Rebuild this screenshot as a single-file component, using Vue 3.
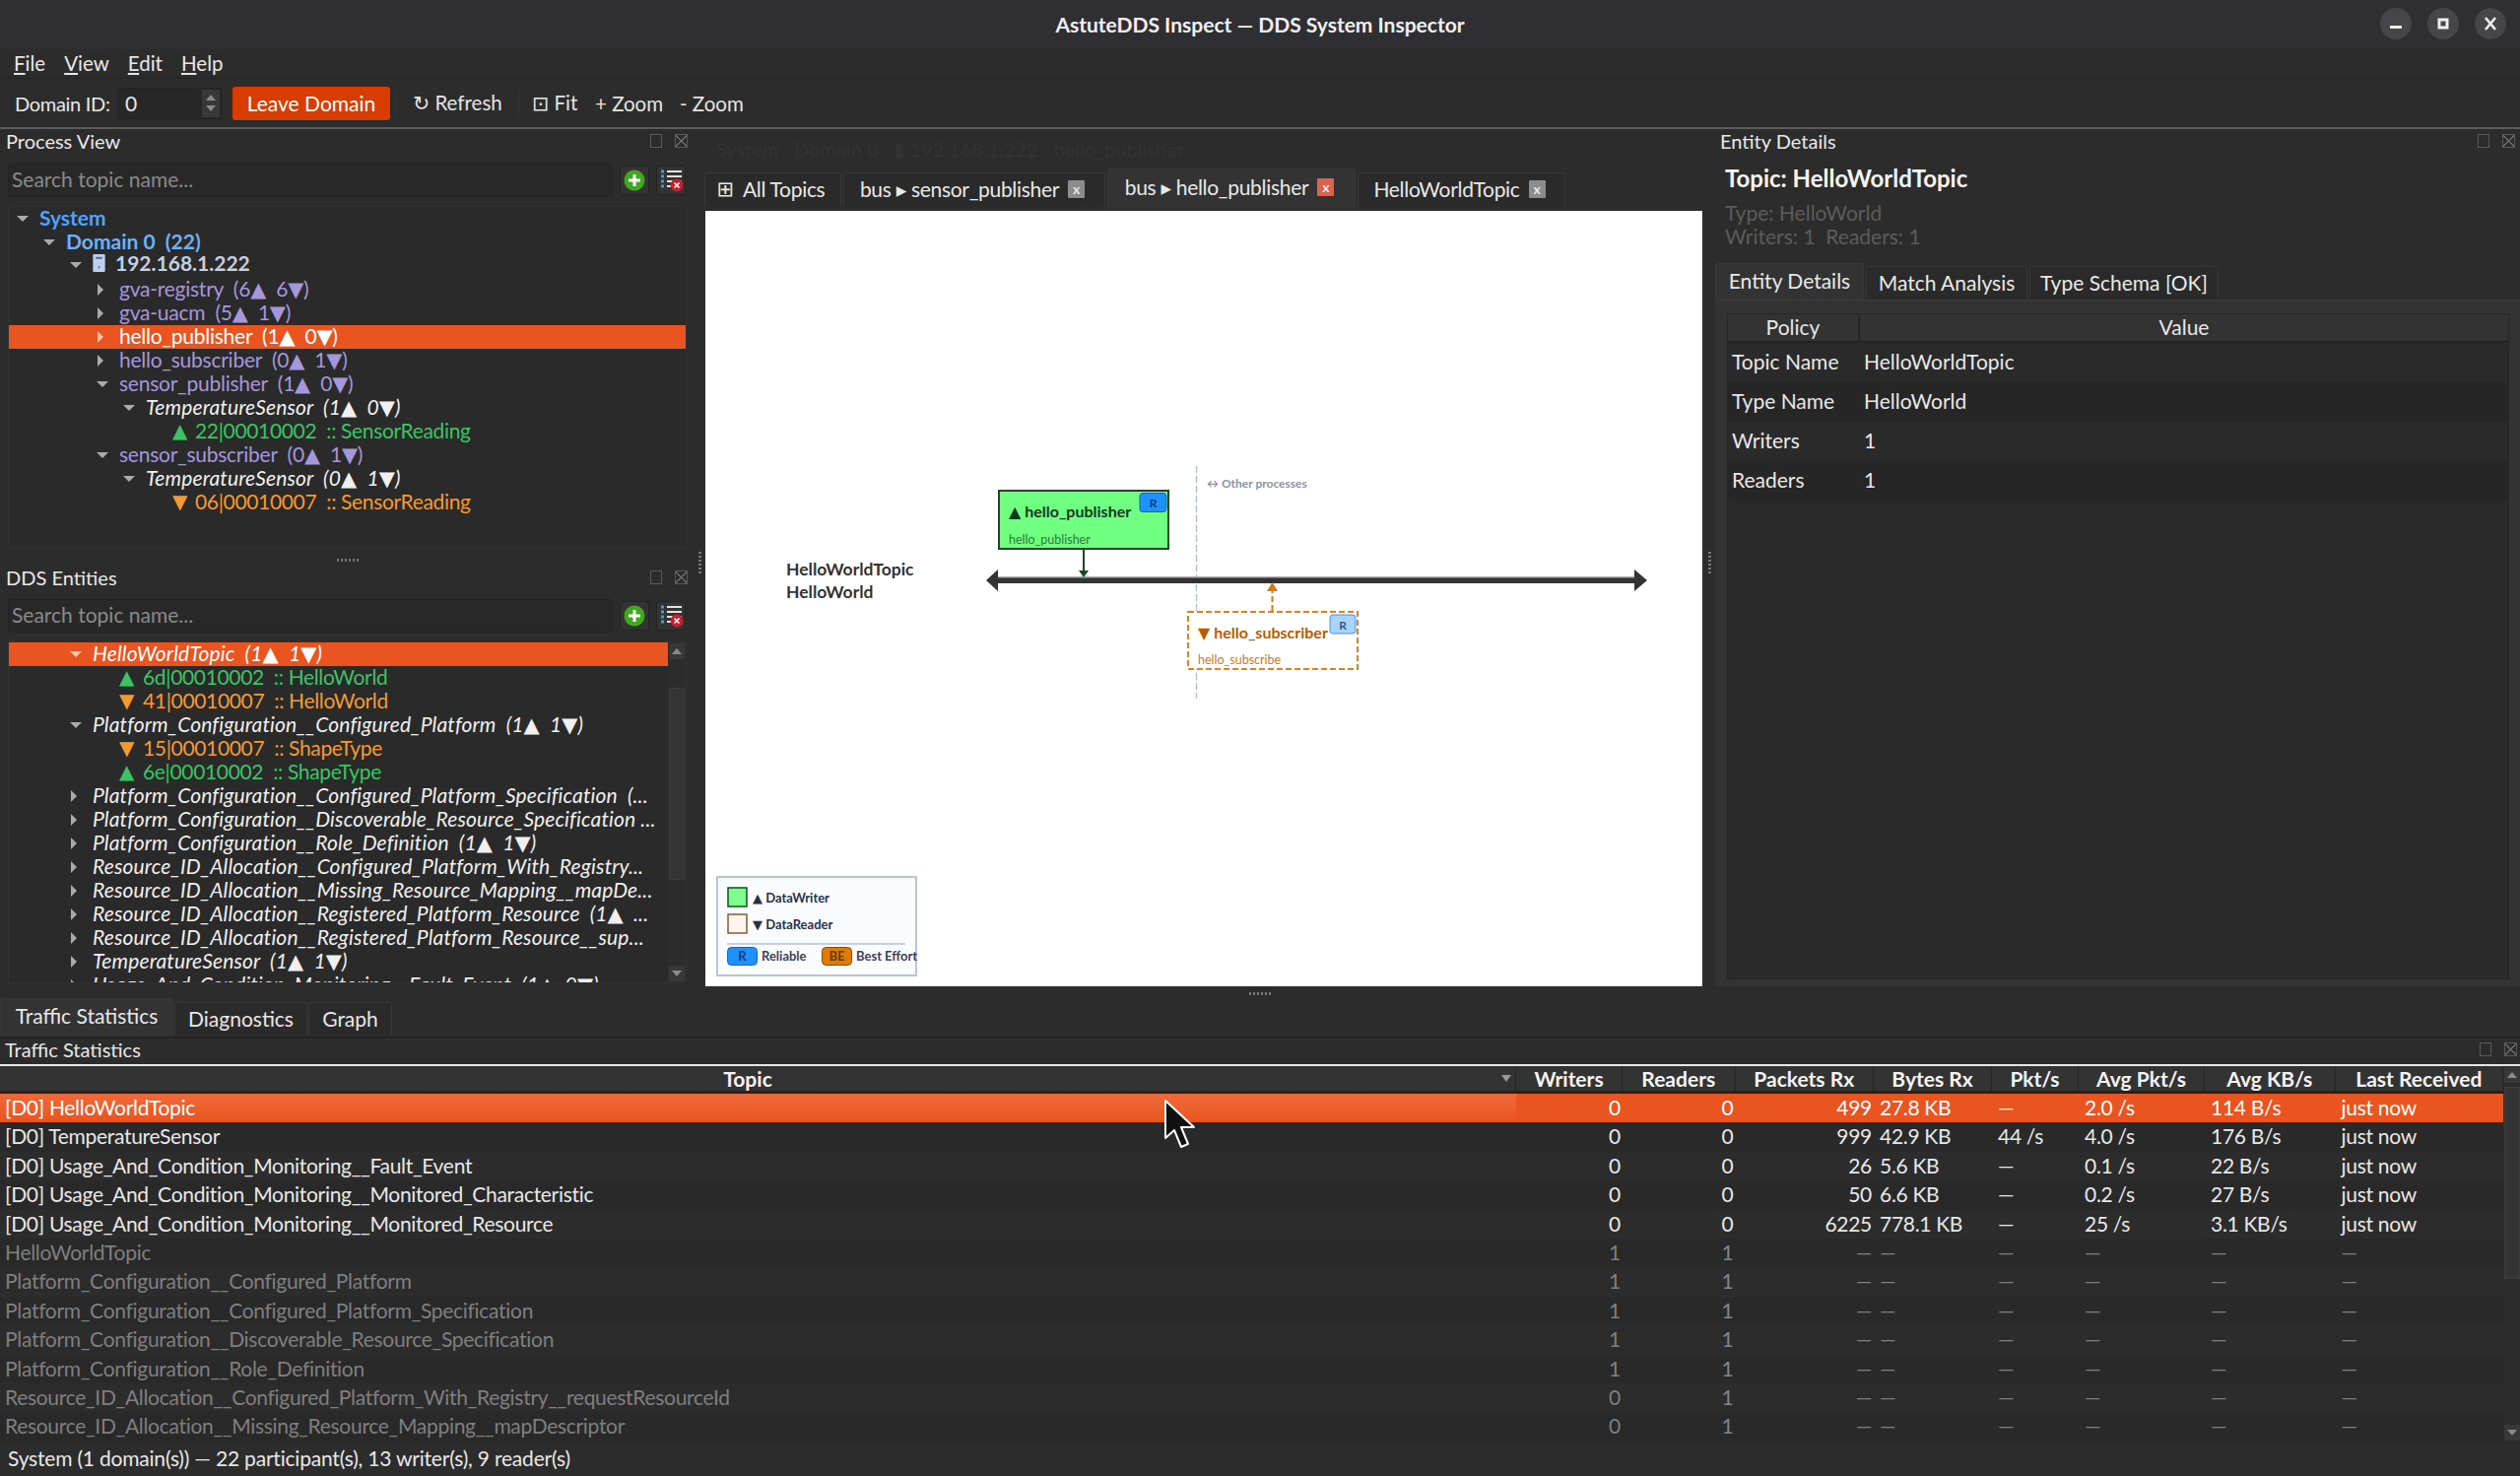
<template>
  <div class="app">
    <header class="titlebar">
      <span class="title">AstuteDDS Inspect — DDS System Inspector</span>
      <div class="winbtns">
        <span class="winbtn"><svg width="14" height="14" viewBox="0 0 14 14"><rect x="1" y="9" width="12" height="3" fill="#eee" /></svg></span>
        <span class="winbtn"><svg width="14" height="14" viewBox="0 0 14 14"><rect x="3" y="3" width="8" height="8" fill="none" stroke="#eee" stroke-width="3" /></svg></span>
        <span class="winbtn"><svg width="14" height="14" viewBox="0 0 14 14"><path d="M2 1 L12 13 M12 1 L2 13" stroke="#eee" stroke-width="2.6" /></svg></span>
      </div>
    </header>

    <nav class="menubar">
      <span v-for="m in menus" :key="m"><u>{{ m[0] }}</u>{{ m.slice(1) }}</span>
    </nav>

    <div class="toolbar">
      <span class="domain-label">Domain ID:</span>
      <div class="spin">
        <span class="spin-val">0</span>
        <div class="spin-btns">
          <span class="tri-up"></span>
          <span class="tri-down"></span>
        </div>
      </div>
      <button class="leave">Leave Domain</button>
      <span class="tsep"></span>
      <span class="tool tool-refresh"><i class="gl">↻</i> Refresh</span>
      <span class="tsep"></span>
      <span class="tool tool-fit"><i class="gl">⊡</i> Fit</span>
      <span class="tool tool-zin">+ Zoom</span>
      <span class="tool tool-zout">- Zoom</span>
    </div>

    <div class="workspace">
      <section class="left">
        <div class="dockhead">
          <span>Process View</span>
          <span class="dockicons"><i class="ic-float"></i><i class="ic-close"></i></span>
        </div>
        <div class="searchrow">
          <div class="search">Search topic name...</div>
          <button class="sbtn">
            <svg width="24" height="24" viewBox="0 0 24 24"><circle cx="12" cy="12" r="10.5" fill="#3fa81f" /><path d="M12 6 V18 M6 12 H18" stroke="#fff" stroke-width="3" /></svg>
          </button>
          <button class="sbtn">
            <svg width="24" height="24" viewBox="0 0 24 24">
              <path d="M8 3 H23 M8 8 H23 M8 13 H23 M8 18 H14" stroke="#e4e4e4" stroke-width="2" />
              <path d="M2 3 H5 M2 8 H5 M2 13 H5 M2 18 H5" stroke="#3e9be0" stroke-width="3" />
              <circle cx="18" cy="17" r="6.5" fill="#c8202f" />
              <path d="M15.5 14.5 L20.5 19.5 M20.5 14.5 L15.5 19.5" stroke="#fff" stroke-width="1.6" />
            </svg>
          </button>
        </div>
        <div class="tree tree-process">
          <div v-for="(r, i) in processRows" :key="i" class="trow" :class="[r.cls, { sel: r.sel }]" :style="{ paddingLeft: 4 + r.depth * 27 + 'px' }">
            <span class="slot"><span v-if="r.arrow" :class="'arrow-' + r.arrow"></span></span>
            <svg v-if="r.server" class="server" width="13" height="19" viewBox="0 0 13 19"><rect width="13" height="19" rx="1" fill="#bcd0f0" /><rect x="3" y="3" width="7" height="2" fill="#56647c" /><circle cx="6.5" cy="14" r="1.2" fill="#56647c" /></svg>
            <span v-if="r.leaf" class="leaf-tri">{{ r.leaf }}</span>
            <span class="tlabel">{{ r.text }}</span>
          </div>
        </div>

        <div class="hsplit hsplit-left"><i class="grip"></i></div>

        <div class="dockhead">
          <span>DDS Entities</span>
          <span class="dockicons"><i class="ic-float"></i><i class="ic-close"></i></span>
        </div>
        <div class="searchrow searchrow-b">
          <div class="search">Search topic name...</div>
          <button class="sbtn">
            <svg width="24" height="24" viewBox="0 0 24 24"><circle cx="12" cy="12" r="10.5" fill="#3fa81f" /><path d="M12 6 V18 M6 12 H18" stroke="#fff" stroke-width="3" /></svg>
          </button>
          <button class="sbtn">
            <svg width="24" height="24" viewBox="0 0 24 24">
              <path d="M8 3 H23 M8 8 H23 M8 13 H23 M8 18 H14" stroke="#e4e4e4" stroke-width="2" />
              <path d="M2 3 H5 M2 8 H5 M2 13 H5 M2 18 H5" stroke="#3e9be0" stroke-width="3" />
              <circle cx="18" cy="17" r="6.5" fill="#c8202f" />
              <path d="M15.5 14.5 L20.5 19.5 M20.5 14.5 L15.5 19.5" stroke="#fff" stroke-width="1.6" />
            </svg>
          </button>
        </div>
        <div class="tree tree-entities">
          <div class="tree-list">
            <div v-for="(r, i) in entityRows" :key="i" class="trow" :class="[r.cls, { sel: r.sel }]" :style="{ paddingLeft: 4 + r.depth * 27 + 'px' }">
              <span class="slot"><span v-if="r.arrow" :class="'arrow-' + r.arrow"></span></span>
              <span v-if="r.leaf" class="leaf-tri">{{ r.leaf }}</span>
              <span class="tlabel">{{ r.text }}</span>
            </div>
          </div>
          <div class="vscroll">
            <span class="sb-btn"><span class="tri-up"></span></span>
            <span class="sb-track"><span class="sb-thumb"></span></span>
            <span class="sb-btn"><span class="tri-down"></span></span>
          </div>
        </div>
      </section>

      <div class="vsplit"><i class="grip-v"></i></div>

      <section class="center">
        <div class="crumb">System › Domain 0 › ▮ 192.168.1.222 › hello_publisher</div>
        <div class="ctabs">
          <div v-for="t in centerTabs" :key="t.label" class="ctab" :class="{ active: t.active }" :style="{ width: t.w + 'px' }">
            <i v-if="t.grid" class="gl">⊞</i>
            <span>{{ t.label }}</span>
            <span v-if="t.close" class="tabx" :class="{ red: t.active }">x</span>
          </div>
        </div>
        <div class="canvas">
          <svg class="diagram" width="1012" height="787" viewBox="716 214 1012 787">
            <line x1="1214.5" y1="473" x2="1214.5" y2="709" stroke="#b4bfcf" stroke-width="1.5" stroke-dasharray="7 3" />
            <text x="1225" y="495" class="d-other">↔ Other processes</text>

            <text x="798" y="584" class="d-topic">HelloWorldTopic</text>
            <text x="798" y="607" class="d-topic">HelloWorld</text>

            <rect x="1013" y="586" width="646" height="6" fill="#333" />
            <rect x="1013" y="585" width="646" height="1.5" fill="#aaa" />
            <path d="M1001 589 L1013 578 V600 Z M1672 589 L1659 578 V600 Z" fill="#333" />

            <rect x="1014" y="498" width="172" height="59" fill="#70ff80" stroke="#1a4a22" stroke-width="2" />
            <rect x="1157" y="500.5" width="27" height="19" rx="3" fill="#1e90ff" stroke="#1565b8" />
            <text x="1170.5" y="515" class="d-badge" fill="#0c3f80" text-anchor="middle">R</text>
            <text x="1024" y="525" class="d-name" fill="#123a1c">▲ hello_publisher</text>
            <text x="1024" y="552" class="d-sub" fill="#2a7a3c">hello_publisher</text>
            <line x1="1100" y1="557" x2="1100" y2="580" stroke="#1a4a22" stroke-width="2" />
            <path d="M1095 579 H1105 L1100 586 Z" fill="#1a4a22" />

            <rect x="1206" y="621" width="172" height="58" fill="#fff" stroke="#e08020" stroke-width="2" stroke-dasharray="6 3" />
            <rect x="1350" y="624" width="26" height="19" rx="3" fill="#a8d4ff" stroke="#4a90d8" />
            <text x="1363" y="638.5" class="d-badge" fill="#2a5a90" text-anchor="middle">R</text>
            <text x="1216" y="648" class="d-name" fill="#b85c00">▼ hello_subscriber</text>
            <text x="1216" y="674" class="d-sub" fill="#d07818">hello_subscribe</text>
            <line x1="1291.5" y1="620" x2="1291.5" y2="598" stroke="#d87810" stroke-width="2" stroke-dasharray="6 3" />
            <path d="M1286 600 H1297 L1291.5 591 Z" fill="#d87810" />

            <rect x="728" y="890" width="202" height="100" fill="#fafbff" stroke="#b8c4d8" stroke-width="2" />
            <rect x="739" y="901" width="19" height="19" fill="#80ff90" stroke="#1a4a22" stroke-width="1.5" />
            <text x="764" y="916" class="d-leg" fill="#2a3048">▲ DataWriter</text>
            <rect x="739" y="928" width="19" height="19" fill="#fff5ee" stroke="#8a5a30" stroke-width="1.5" />
            <text x="764" y="943" class="d-leg" fill="#2a3048">▼ DataReader</text>
            <rect x="738" y="957" width="181" height="2" fill="#c8d0dc" />
            <rect x="738.5" y="961.5" width="30" height="18" rx="4" fill="#1e90ff" stroke="#1565b8" />
            <text x="753.5" y="975" class="d-leg" fill="#0c3f80" text-anchor="middle">R</text>
            <text x="773" y="975" class="d-leg" fill="#3c4258">Reliable</text>
            <rect x="834.5" y="961.5" width="30" height="18" rx="4" fill="#e07a00" stroke="#8a4a00" />
            <text x="849.5" y="975" class="d-leg" fill="#6a3a00" text-anchor="middle">BE</text>
            <text x="869" y="975" class="d-leg" fill="#3c4258">Best Effort</text>
          </svg>
        </div>
      </section>

      <div class="vsplit vsplit-r"><i class="grip-v"></i></div>

      <section class="right">
        <div class="dockhead dockhead-r">
          <span>Entity Details</span>
          <span class="dockicons"><i class="ic-float"></i><i class="ic-close"></i></span>
        </div>
        <div class="ent-title">Topic: HelloWorldTopic</div>
        <div class="ent-meta ent-meta-first">Type: HelloWorld</div>
        <div class="ent-meta">Writers: 1&nbsp; Readers: 1</div>
        <div class="rtabs">
          <div v-for="t in rightTabs" :key="t.label" class="rtab" :class="{ active: t.active }" :style="{ width: t.w + 'px' }">{{ t.label }}</div>
        </div>
        <div class="rpanel">
          <div class="ptable">
            <div class="phead"><span class="pcol">Policy</span><span class="pval">Value</span></div>
            <div v-for="(p, i) in policies" :key="p[0]" class="prow" :class="{ alt: i % 2 === 1 }">
              <span class="pk">{{ p[0] }}</span><span class="pv">{{ p[1] }}</span>
            </div>
          </div>
        </div>
      </section>
    </div>

    <div class="hsplit hsplit-main"><i class="grip"></i></div>

    <div class="btabs">
      <div v-for="t in bottomTabs" :key="t.label" class="btab" :class="{ active: t.active }" :style="{ width: t.w + 'px' }">{{ t.label }}</div>
    </div>

    <div class="dockhead dockhead-t">
      <span>Traffic Statistics</span>
      <span class="dockicons"><i class="ic-float"></i><i class="ic-close"></i></span>
    </div>

    <div class="traffic">
      <div class="tgrid-wrap">
        <div class="thead tgrid">
          <span v-for="h in headers" :key="h" class="th">{{ h }}</span>
          <span class="sort-ind"></span>
        </div>
        <div v-for="(r, i) in rows" :key="i" class="tr tgrid" :class="{ sel: i === 0, dim: r.dim, alt: i % 2 === 0 }">
          <span class="td td-topic">{{ r.topic }}</span>
          <span class="td num">{{ r.w }}</span>
          <span class="td num rd">{{ r.r }}</span>
          <span class="td num">{{ r.pk }}</span>
          <span class="td">{{ r.by }}</span>
          <span class="td">{{ r.ps }}</span>
          <span class="td">{{ r.ap }}</span>
          <span class="td">{{ r.kb }}</span>
          <span class="td">{{ r.last }}</span>
        </div>
      </div>
      <div class="vscroll vscroll-t">
        <span class="sb-btn"><span class="tri-up"></span></span>
        <span class="sb-track"><span class="sb-thumb"></span></span>
        <span class="sb-btn"><span class="tri-down"></span></span>
      </div>
    </div>

    <footer class="status">System (1 domain(s)) — 22 participant(s), 13 writer(s), 9 reader(s)</footer>

    <svg class="cursor" width="34" height="52" viewBox="0 0 34 52">
      <path d="M2 2 L2 40 L11 32 L18 49 L25 46 L18 29 L31 29 Z" fill="#111" stroke="#fff" stroke-width="2" stroke-linejoin="round" />
    </svg>
  </div>
</template>

<script setup>
const menus = ['File', 'View', 'Edit', 'Help']

const processRows = [
  { depth: 0, arrow: 'down', text: 'System', cls: 'c-system' },
  { depth: 1, arrow: 'down', text: 'Domain 0  (22)', cls: 'c-domain' },
  { depth: 2, arrow: 'down', text: '192.168.1.222', cls: 'c-host', server: true },
  { depth: 3, arrow: 'right', text: 'gva-registry  (6▲  6▼)', cls: 'c-proc' },
  { depth: 3, arrow: 'right', text: 'gva-uacm  (5▲  1▼)', cls: 'c-proc' },
  { depth: 3, arrow: 'right', text: 'hello_publisher  (1▲  0▼)', cls: 'c-proc', sel: true },
  { depth: 3, arrow: 'right', text: 'hello_subscriber  (0▲  1▼)', cls: 'c-proc' },
  { depth: 3, arrow: 'down', text: 'sensor_publisher  (1▲  0▼)', cls: 'c-proc' },
  { depth: 4, arrow: 'down', text: 'TemperatureSensor  (1▲  0▼)', cls: 'c-topic' },
  { depth: 5, leaf: '▲', text: '22|00010002  :: SensorReading', cls: 'c-writer' },
  { depth: 3, arrow: 'down', text: 'sensor_subscriber  (0▲  1▼)', cls: 'c-proc' },
  { depth: 4, arrow: 'down', text: 'TemperatureSensor  (0▲  1▼)', cls: 'c-topic' },
  { depth: 5, leaf: '▼', text: '06|00010007  :: SensorReading', cls: 'c-reader' },
]

const entityRows = [
  { depth: 2, arrow: 'down', text: 'HelloWorldTopic  (1▲  1▼)', cls: 'c-topic', sel: true },
  { depth: 3, leaf: '▲', text: '6d|00010002  :: HelloWorld', cls: 'c-writer c-leaf2' },
  { depth: 3, leaf: '▼', text: '41|00010007  :: HelloWorld', cls: 'c-reader c-leaf2' },
  { depth: 2, arrow: 'down', text: 'Platform_Configuration__Configured_Platform  (1▲  1▼)', cls: 'c-topic' },
  { depth: 3, leaf: '▼', text: '15|00010007  :: ShapeType', cls: 'c-reader c-leaf2' },
  { depth: 3, leaf: '▲', text: '6e|00010002  :: ShapeType', cls: 'c-writer c-leaf2' },
  { depth: 2, arrow: 'right', text: 'Platform_Configuration__Configured_Platform_Specification  (...', cls: 'c-topic' },
  { depth: 2, arrow: 'right', text: 'Platform_Configuration__Discoverable_Resource_Specification ...', cls: 'c-topic' },
  { depth: 2, arrow: 'right', text: 'Platform_Configuration__Role_Definition  (1▲  1▼)', cls: 'c-topic' },
  { depth: 2, arrow: 'right', text: 'Resource_ID_Allocation__Configured_Platform_With_Registry...', cls: 'c-topic' },
  { depth: 2, arrow: 'right', text: 'Resource_ID_Allocation__Missing_Resource_Mapping__mapDe...', cls: 'c-topic' },
  { depth: 2, arrow: 'right', text: 'Resource_ID_Allocation__Registered_Platform_Resource  (1▲  ...', cls: 'c-topic' },
  { depth: 2, arrow: 'right', text: 'Resource_ID_Allocation__Registered_Platform_Resource__sup...', cls: 'c-topic' },
  { depth: 2, arrow: 'right', text: 'TemperatureSensor  (1▲  1▼)', cls: 'c-topic' },
  { depth: 2, arrow: 'right', text: 'Usage_And_Condition_Monitoring__Fault_Event  (1▲  0▼)', cls: 'c-topic' },
]

const centerTabs = [
  { label: 'All Topics', w: 139, grid: true },
  { label: 'bus ▸ sensor_publisher', w: 266, close: true },
  { label: 'bus ▸ hello_publisher', w: 252, close: true, active: true },
  { label: 'HelloWorldTopic', w: 211, close: true },
]

const rightTabs = [
  { label: 'Entity Details', w: 151, active: true },
  { label: 'Match Analysis', w: 164 },
  { label: 'Type Schema [OK]', w: 192 },
]

const bottomTabs = [
  { label: 'Traffic Statistics', w: 176, active: true },
  { label: 'Diagnostics', w: 135 },
  { label: 'Graph', w: 85 },
]

const policies = [
  ['Topic Name', 'HelloWorldTopic'],
  ['Type Name', 'HelloWorld'],
  ['Writers', '1'],
  ['Readers', '1'],
]

const headers = ['Topic', 'Writers', 'Readers', 'Packets Rx', 'Bytes Rx', 'Pkt/s', 'Avg Pkt/s', 'Avg KB/s', 'Last Received']

const live = (topic, pk, by, ps, ap, kb) => ({ topic, w: 0, r: 0, pk, by, ps, ap, kb, last: 'just now' })
const idle = (topic, w) => ({ topic, w, r: 1, pk: '—', by: '—', ps: '—', ap: '—', kb: '—', last: '—', dim: true })

const rows = [
  live('[D0] HelloWorldTopic', 499, '27.8 KB', '—', '2.0 /s', '114 B/s'),
  live('[D0] TemperatureSensor', 999, '42.9 KB', '44 /s', '4.0 /s', '176 B/s'),
  live('[D0] Usage_And_Condition_Monitoring__Fault_Event', 26, '5.6 KB', '—', '0.1 /s', '22 B/s'),
  live('[D0] Usage_And_Condition_Monitoring__Monitored_Characteristic', 50, '6.6 KB', '—', '0.2 /s', '27 B/s'),
  live('[D0] Usage_And_Condition_Monitoring__Monitored_Resource', 6225, '778.1 KB', '—', '25 /s', '3.1 KB/s'),
  idle('HelloWorldTopic', 1),
  idle('Platform_Configuration__Configured_Platform', 1),
  idle('Platform_Configuration__Configured_Platform_Specification', 1),
  idle('Platform_Configuration__Discoverable_Resource_Specification', 1),
  idle('Platform_Configuration__Role_Definition', 1),
  idle('Resource_ID_Allocation__Configured_Platform_With_Registry__requestResourceId', 0),
  idle('Resource_ID_Allocation__Missing_Resource_Mapping__mapDescriptor', 0),
]
</script>

<style scoped>
.app {
  position: relative;
  width: 2558px;
  height: 1498px;
  overflow: hidden;
  background: #2c2c2c;
  color: #e8e8e8;
  font-family: Lato, "Noto Sans", "DejaVu Sans", sans-serif;
  font-size: 21px;
  white-space: pre;
}
.gl { font-family: "DejaVu Sans", sans-serif; font-style: normal; }

.titlebar {
  height: 50px;
  background: #2f2f33;
  display: flex;
  align-items: center;
  justify-content: center;
  position: relative;
  padding-bottom: 2px;
  box-sizing: border-box;
}
.title { font-weight: 700; font-size: 21px; color: #f0f0f0; }
.winbtns { position: absolute; right: 14px; top: 8px; display: flex; gap: 16px; }
.winbtn {
  width: 32px; height: 32px; border-radius: 50%;
  background: #45454a;
  display: flex; align-items: center; justify-content: center;
}

.menubar {
  height: 30px;
  display: flex;
  align-items: center;
  padding: 0 0 2px 14px;
  gap: 19px;
  border-bottom: 1px solid #262626;
  box-sizing: border-box;
  font-size: 20.5px;
}

.toolbar {
  height: 49px;
  display: flex;
  align-items: center;
  padding-left: 15px;
  box-sizing: border-box;
}
.domain-label { width: 104px; font-size: 20px; letter-spacing: -0.3px; }
.spin {
  width: 106px; height: 32px;
  background: #272727;
  border: 1px solid #232323;
  border-radius: 3px;
  box-sizing: border-box;
  display: flex;
  align-items: center;
  justify-content: space-between;
  padding-left: 7px;
}
.spin-btns {
  width: 18px; height: 28px; margin-right: 1px;
  background: #383838;
  display: flex; flex-direction: column; align-items: center; justify-content: space-evenly;
}
.tri-up { width: 0; height: 0; border: 5px solid transparent; border-top: 0; border-bottom: 6px solid #8a8a8a; }
.tri-down { width: 0; height: 0; border: 5px solid transparent; border-bottom: 0; border-top: 6px solid #8a8a8a; }
.leave {
  margin-left: 11px;
  width: 160px; height: 34px;
  border: 0; border-radius: 3px;
  background: #d83c00;
  color: #fff;
  font: inherit;
}
.tsep { width: 1px; height: 28px; background: #343434; margin-left: 6px; }
.tool { color: #e4e4e4; font-size: 20.5px; }
.tool-refresh { margin-left: 16px; width: 101px; }
.tool-fit { margin-left: 13px; width: 64px; }
.tool-zin { width: 86px; }

.workspace { height: 877px; display: flex; border-top: 2px solid #5c5c5c; }

.left { width: 706px; flex: none; }
.center { width: 1016px; flex: none; }
.right { flex: 1; min-width: 0; }

.dockhead {
  height: 26px;
  display: flex;
  align-items: center;
  justify-content: space-between;
  padding: 0 6px 2px;
  font-size: 20px;
  box-sizing: border-box;
}
.dockhead-r { padding: 0 3px 2px 6px; }
.dockhead-t { height: 28px; padding: 0 1px 2px 5px; }
.dockicons { display: flex; gap: 13px; padding-right: 2px; }
.ic-float { width: 10px; height: 12px; border: 1px solid #5a5a5a; box-sizing: content-box; }
.ic-close {
  width: 11px; height: 12px; border: 1px solid #5a5a5a;
  background:
    linear-gradient(45deg, transparent 45%, #6a6a6a 45%, #6a6a6a 55%, transparent 55%),
    linear-gradient(-45deg, transparent 45%, #6a6a6a 45%, #6a6a6a 55%, transparent 55%);
}

.searchrow { display: flex; align-items: center; margin: 9px 10px 0 8px; gap: 7px; }
.searchrow-b { margin-top: 8px; }
.search {
  flex: 1; height: 34px;
  background: #282828;
  border: 1px solid #232323;
  border-radius: 3px;
  box-sizing: border-box;
  padding: 0 0 3px 3px;
  line-height: 24px;
  color: #8a8a8a;
  display: flex; align-items: center;
}
.sbtn {
  width: 30px; height: 30px; padding: 0;
  background: #333;
  border: 1px solid #232323;
  border-radius: 3px;
  display: flex; align-items: center; justify-content: center;
}

.tree {
  margin: 10px 10px 0 9px;
  background: #2a2a2a;
  box-shadow: 0 0 0 1px #323232;
  overflow: hidden;
}
.tree-process { height: 345px; box-sizing: border-box; }
.tree-entities { height: 345px; display: flex; }
.tree-list { flex: 1; min-width: 0; overflow: hidden; }

.trow { height: 24px; line-height: 20px; display: flex; align-items: center; padding-bottom: 3px; box-sizing: border-box; }
.slot { width: 27px; flex: none; padding: 3px 0 0 4px; box-sizing: border-box; display: flex; }
.arrow-down { width: 0; height: 0; border: 6px solid transparent; border-bottom: 0; border-top: 6px solid #aaa; }
.arrow-right { width: 0; height: 0; border: 6px solid transparent; border-right: 0; border-left: 6px solid #aaa; margin-left: 1px; }
.server { margin-right: 10px; flex: none; }
.leaf-tri { width: 23px; flex: none; font-size: 20px; font-family: "DejaVu Sans", sans-serif; }
.c-leaf2 .leaf-tri { width: 24px; }

.c-system { color: #4da3ff; font-weight: 700; }
.c-domain { color: #70b0f5; font-weight: 700; }
.c-host { color: #c4d0e4; font-weight: 700; padding-bottom: 6px; }
.c-host .server { height: 18px; }
.c-proc { color: #a696dc; letter-spacing: -0.25px; }
.c-topic { color: #f0f0f0; font-style: italic; letter-spacing: 0.15px; }
.c-writer { color: #3cc464; letter-spacing: -0.35px; }
.c-reader { color: #f59a30; letter-spacing: -0.35px; }
.trow.sel { background: #e95420; color: #fff; }
.trow.sel .arrow-right { border-left-color: #ffc8a8; }
.trow.sel .arrow-down { border-top-color: #ffc8a8; }

.vscroll { width: 18px; flex: none; display: flex; flex-direction: column; align-items: center; background: #2c2c2c; }
.sb-btn {
  width: 16px; height: 16px; margin: 1px 0;
  background: #383838;
  display: flex; align-items: center; justify-content: center;
}
.sb-track { flex: 1; width: 100%; padding-top: 28px; box-sizing: border-box; }
.sb-thumb { display: block; width: 16px; height: 195px; margin: 0 auto; background: #343434; border: 1px solid #3c3c3c; box-sizing: border-box; }

.hsplit { display: flex; align-items: center; justify-content: center; }
.hsplit-left { height: 19px; padding-top: 7px; box-sizing: border-box; }
.hsplit-main { height: 5px; margin: -2px 0 2px; }
.grip { width: 23px; height: 3px; background: repeating-linear-gradient(90deg, #777 0 2px, transparent 2px 4px); }

.vsplit { width: 8px; flex: none; display: flex; align-items: center; justify-content: center; }
.vsplit-r { width: 10px; }
.grip-v { width: 3px; height: 24px; background: repeating-linear-gradient(0deg, #777 0 2px, transparent 2px 4px); }

.crumb { height: 40px; display: flex; align-items: center; padding-left: 13px; color: #333; font-size: 20px; }

.ctabs { height: 41px; display: flex; gap: 2px; padding-left: 1px; align-items: flex-end; }
.ctab {
  height: 34px; margin-bottom: 3px;
  flex: none;
  background: #2a2a2a;
  border: 1px solid #383838;
  border-bottom: 0;
  border-radius: 3px 3px 0 0;
  box-sizing: border-box;
  display: flex; align-items: center; justify-content: center; gap: 9px;
  letter-spacing: -0.3px;
  padding: 0 4px 2px 0;
}
.ctab.active { height: 41px; margin-bottom: 0; background: #333; padding-bottom: 5px; }
.tabx {
  width: 17px; height: 18px;
  background: #8c8c8c;
  border-radius: 1px;
  color: #e8e8e8;
  font-size: 14px;
  font-weight: 700;
  display: flex; align-items: center; justify-content: center;
}
.tabx.red { background: #e0614a; }

.canvas {
  margin: 2px 2px 0;
  height: 787px;
  background: #fff;
  overflow: hidden;
}
.diagram { display: block; }
.d-other { font-size: 12px; font-weight: 700; fill: #8694aa; }
.d-topic { font-size: 17.5px; font-weight: 700; fill: #333; }
.d-name { font-size: 16px; font-weight: 700; }
.d-sub { font-size: 12.5px; }
.d-badge { font-size: 12px; font-weight: 700; }
.d-leg { font-size: 13px; font-weight: 700; }

.ent-title { margin: 10px 0 0 11px; height: 28px; line-height: 28px; font-size: 24px; font-weight: 700; color: #f4f4f4; }
.ent-meta { margin-left: 11px; height: 24px; line-height: 24px; color: #5c5c5c; }
.ent-meta-first { margin-top: 9px; }
.rtabs { display: flex; gap: 2px; margin: 15px 0 0 1px; height: 37px; align-items: flex-end; }
.rtab {
  height: 33px; margin-bottom: 1px;
  flex: none;
  background: #2a2a2a;
  border: 1px solid #383838; border-bottom: 0;
  border-radius: 3px 3px 0 0;
  box-sizing: border-box;
  padding-bottom: 2px;
  display: flex; align-items: center; justify-content: center;
}
.rtab.active { height: 37px; margin-bottom: 0; background: #333; padding-bottom: 4px; }
.rpanel {
  margin-left: 1px;
  height: 697px;
  background: #333;
  border-top: 1px solid #3c3c3c;
  box-sizing: border-box;
  padding: 14px 12px 8px 13px;
}
.ptable { height: 100%; background: #2a2a2a; box-shadow: 0 0 0 1px #262626; }
.phead { height: 27px; display: flex; background: #333; border-bottom: 2px solid #232323; box-sizing: content-box; }
.pcol { width: 132px; text-align: center; border-right: 2px solid #262626; line-height: 25px; }
.pval { flex: 1; text-align: center; line-height: 25px; }
.prow { height: 40px; display: flex; align-items: center; padding: 0 0 3px 4px; box-sizing: border-box; }
.prow.alt { background: #262626; }
.pk { width: 134px; }

.btabs { height: 39px; display: flex; gap: 1px; align-items: flex-end; border-bottom: 2px solid #232323; box-sizing: content-box; margin-bottom: -2px; }
.btab {
  height: 33px; margin-bottom: 2px;
  flex: none;
  background: #2a2a2a;
  border: 1px solid #383838; border-bottom: 0;
  border-radius: 3px 3px 0 0;
  box-sizing: border-box;
  padding-bottom: 2px;
  display: flex; align-items: center; justify-content: center;
}
.btab.active { height: 39px; margin-bottom: 0; background: #333; padding-bottom: 5px; }

.traffic { height: 383px; display: flex; border-top: 2px solid #e8e8e8; }
.tgrid-wrap { width: 2541px; flex: none; }
.tgrid {
  display: grid;
  grid-template-columns: 1539px 108px 114.5px 140.5px 120px 88px 128px 132.6px 170.4px;
}
.thead { height: 25px; position: relative; background: #333; border-bottom: 3px solid #222; font-weight: 700; box-sizing: content-box; font-size: 21px; }
.th { text-align: center; border-right: 1px solid #262626; line-height: 25px; color: #f4f4f4; }
.th:first-child { padding-right: 20px; }
.sort-ind { position: absolute; left: 1524px; top: 9px; width: 0; height: 0; border: 5px solid transparent; border-bottom: 0; border-top: 7px solid #999; }
.tr { height: 29.4px; line-height: 28px; background: #292929; letter-spacing: -0.3px; }
.tr.alt { background: #2c2c2c; }
.td { padding-left: 6px; white-space: nowrap; }
.td-topic { padding-left: 5px; }
.num { text-align: right; padding: 0 2px 0 0; }
.tr.dim { color: #7f7f7f; }
.tr.dim .rd { color: #7f868c; }
.tr.sel { background: #e95420; color: #fff; }
.tr.sel .td-topic { background: linear-gradient(#f0693a, #e95420); }
.vscroll-t { width: 17px; height: 381px; background: #2c2c2c; }
.vscroll-t .sb-track { padding-top: 3px; }

.status { height: 35px; line-height: 26px; display: flex; align-items: center; padding: 0 0 4px 8px; margin-top: -1px; border-top: 1px solid #282828; box-sizing: border-box; letter-spacing: -0.2px; }

.cursor { position: absolute; left: 1181px; top: 1115px; }
</style>

<style>
html, body { margin: 0; background: #2c2c2c; }
</style>
